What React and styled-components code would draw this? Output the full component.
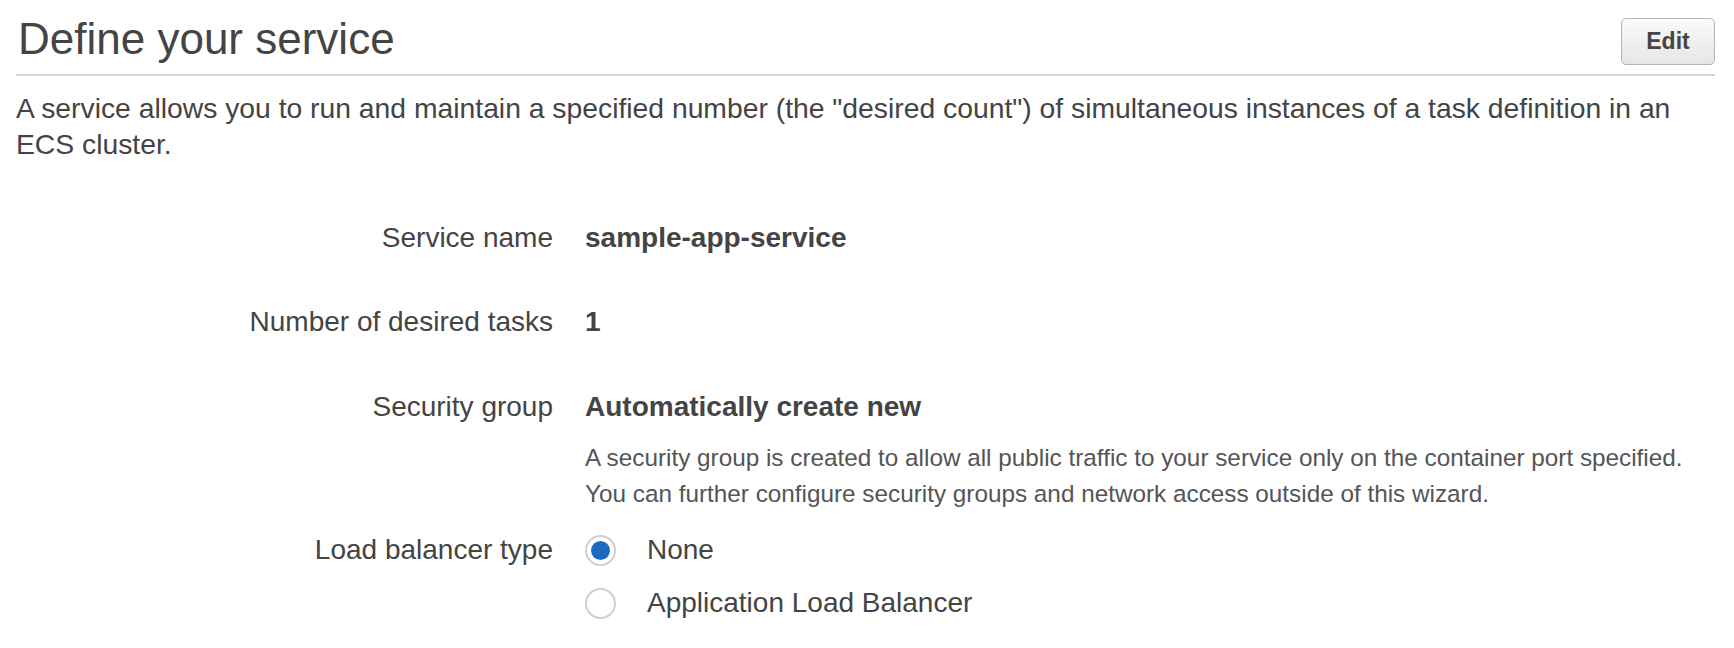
import styled, { createGlobalStyle } from "styled-components";

const GlobalStyle = createGlobalStyle`
  html, body {
    margin: 0;
    padding: 0;
    background: #fff;
  }
  body {
    font-family: "Liberation Sans", Arial, sans-serif;
    color: #444;
  }
`;

const Page = styled.div`
  width: 1734px;
  padding: 0 19px 0 16px;
  box-sizing: border-box;
`;

const Header = styled.div`
  display: flex;
  align-items: center;
  justify-content: space-between;
  height: 74px;
  border-bottom: 2px solid #d4d4d4;
`;

const Title = styled.h1`
  margin: 4px 0 0;
  padding-left: 2px;
  font-size: 44px;
  font-weight: 400;
  color: #444;
  line-height: 1;
`;

const EditButton = styled.button`
  width: 94px;
  height: 47px;
  margin-top: 8px;
  border: 1px solid #b4b4b4;
  border-radius: 5px;
  background: linear-gradient(#fafafa, #e6e6e6);
  font-family: inherit;
  font-size: 23px;
  font-weight: 700;
  color: #444;
  cursor: pointer;
`;

const Intro = styled.p`
  margin: 14px 0 0;
  font-size: 28.3px;
  line-height: 36px;
  color: #444;
`;

const Form = styled.div`
  display: grid;
  grid-template-columns: 537px 1fr;
  column-gap: 32px;
  margin-top: 60px;
`;

const Label = styled.div`
  text-align: right;
  font-size: 28px;
  line-height: 32px;
  color: #444;
  margin-bottom: ${(p) => p.$gap}px;
`;

const Value = styled.div`
  font-size: 28px;
  line-height: 32px;
  font-weight: 700;
  color: #444;
  margin-bottom: ${(p) => p.$gap}px;
`;

const Help = styled.div`
  font-size: 24.3px;
  font-weight: 400;
  line-height: 36px;
  color: #555;
  margin-top: 17px;
`;

const RadioList = styled.div`
  display: flex;
  flex-direction: column;
  gap: 21px;
`;

const RadioRow = styled.label`
  display: flex;
  align-items: center;
  gap: 31px;
  font-size: 28px;
  font-weight: 400;
  color: #444;
  line-height: 32px;
`;

const RadioCircle = styled.span`
  width: 31px;
  height: 31px;
  box-sizing: border-box;
  border-radius: 50%;
  border: 2px solid #cfcfcf;
  background: #fff;
  display: flex;
  align-items: center;
  justify-content: center;

  &::after {
    content: "";
    width: 19px;
    height: 19px;
    border-radius: 50%;
    background: ${(p) => (p.$checked ? "#1c6abf" : "transparent")};
  }
`;

export default function App() {
  return (
    <>
      <GlobalStyle />
      <Page>
        <Header>
          <Title>Define your service</Title>
          <EditButton>Edit</EditButton>
        </Header>
        <Intro>
          A service allows you to run and maintain a specified number (the
          "desired count") of simultaneous instances of a task definition in an
          ECS cluster.
        </Intro>
        <Form>
          <Label $gap={52}>Service name</Label>
          <Value $gap={52}>sample-app-service</Value>

          <Label $gap={53}>Number of desired tasks</Label>
          <Value $gap={53}>1</Value>

          <Label $gap={22}>Security group</Label>
          <Value $gap={22}>
            Automatically create new
            <Help>
              A security group is created to allow all public traffic to your
              service only on the container port specified.
              <br />
              You can further configure security groups and network access
              outside of this wizard.
            </Help>
          </Value>

          <Label $gap={0}>Load balancer type</Label>
          <RadioList>
            <RadioRow>
              <RadioCircle $checked />
              None
            </RadioRow>
            <RadioRow>
              <RadioCircle />
              Application Load Balancer
            </RadioRow>
          </RadioList>
        </Form>
      </Page>
    </>
  );
}
